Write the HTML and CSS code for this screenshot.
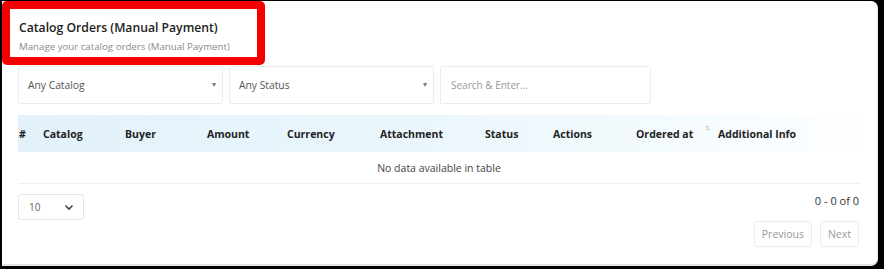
FILE: index.html
```html
<!DOCTYPE html>
<html lang="en">
<head>
  <meta charset="UTF-8">
  <meta name="viewport" content="width=device-width, initial-scale=1.0">
  <title>Catalog Orders (Manual Payment)</title>
  <link rel="stylesheet" href="styles.css">
</head>
<body>
  <div class="frame">
    <!-- TIÊU ĐỀ -->
    <div class="page-head">
      <h1 class="page-title">Catalog Orders (Manual Payment)</h1>
      <p class="page-sub">Manage your catalog orders (Manual Payment)</p>
    </div>

    <div class="content">
      <!-- BỘ LỌC -->
      <div class="filters">
        <div class="select-box">
          <span>Any Catalog</span>
          <span class="caret">&#9662;</span>
        </div>
        <div class="select-box">
          <span>Any Status</span>
          <span class="caret">&#9662;</span>
        </div>
        <input type="text" class="search-box" placeholder="Search &amp; Enter...">
      </div>

      <!-- BẢNG -->
      <table class="orders-table">
        <colgroup>
          <col style="width: 24px">
          <col style="width: 82px">
          <col style="width: 82px">
          <col style="width: 80px">
          <col style="width: 93px">
          <col style="width: 105px">
          <col style="width: 68px">
          <col style="width: 83px">
          <col style="width: 82px">
          <col>
        </colgroup>
        <thead>
          <tr>
            <th>#</th>
            <th>Catalog</th>
            <th>Buyer</th>
            <th>Amount</th>
            <th>Currency</th>
            <th>Attachment</th>
            <th>Status</th>
            <th>Actions</th>
            <th class="sorted">Ordered at <span class="sort-icon">&#8593;&#8595;</span></th>
            <th>Additional Info</th>
          </tr>
        </thead>
        <tbody>
          <tr>
            <td colspan="10" class="empty">No data available in table</td>
          </tr>
        </tbody>
      </table>

      <!-- PHÂN TRANG -->
      <div class="table-foot">
        <div class="length-box">
          <span>10</span>
          <svg width="10" height="7" viewBox="0 0 10 7"><path d="M1.5 1.5 L5 5 L8.5 1.5" fill="none" stroke="#444" stroke-width="1.6"/></svg>
        </div>
        <div class="paging">
          <div class="info">0 - 0 of 0</div>
          <div class="pager">
            <button class="page-btn">Previous</button>
            <button class="page-btn">Next</button>
          </div>
        </div>
      </div>
    </div>
  </div>
</body>
</html>
```

FILE: styles.css
```css
/* === KHUNG === */
body {
  margin: 0;
  background: #000;
  font-family: 'Open Sans', 'Noto Sans', sans-serif;
  color: #333;
}

.frame {
  margin: 1px 6px 3px 2px;
  height: 263px;
  background: #fff;
  border-radius: 0 7px 7px 0;
  border-bottom: 2px solid #e4e4e6;
  border-right: 1px solid #ececec;
}

/* === TIÊU ĐỀ === */
.page-head {
  width: 247px;
  height: 48px;
  border: 8px solid #f40000;
  border-radius: 5px;
  padding: 0;
}

.page-title {
  margin: 0;
  padding: 10px 0 0 9px;
  font-size: 12.2px;
  font-weight: 600;
  color: #222;
  line-height: 17px;
  white-space: nowrap;
}

.page-sub {
  margin: 3px 0 0 9px;
  font-size: 9.7px;
  color: #8b8b8b;
  line-height: 15px;
  white-space: nowrap;
}

.content {
  padding: 1px 18px 0 16px;
}

/* === BỘ LỌC === */
.filters {
  display: flex;
  gap: 6px;
  height: 38px;
}

.select-box {
  width: 205px;
  box-sizing: border-box;
  border: 1px solid #ececec;
  border-radius: 2px;
  display: flex;
  justify-content: space-between;
  align-items: center;
  padding: 0 6px 0 9px;
  font-size: 10.3px;
  color: #555;
}

.caret {
  font-size: 8px;
  color: #777;
  margin-top: -4px;
}

.search-box {
  width: 211px;
  box-sizing: border-box;
  border: 1px solid #ececec;
  border-radius: 2px;
  padding: 0 10px;
  font-family: inherit;
  font-size: 10px;
  margin: 0;
  outline: none;
}

.search-box::placeholder {
  color: #999;
}

/* === BẢNG === */
.orders-table {
  width: 842px;
  margin-top: 11px;
  border-collapse: collapse;
  table-layout: fixed;
}

.orders-table thead tr {
  background: linear-gradient(90deg, #e2f1fa 0%, #eaf6fc 45%, #f5fbfe 80%, #fdfeff 100%);
}

.orders-table th {
  height: 37px;
  padding: 0 0 0 1px;
  text-align: left;
  font-size: 10.5px;
  font-weight: 700;
  color: #222;
  white-space: nowrap;
}

.sorted {
  position: relative;
}

.sort-icon {
  position: absolute;
  right: 9px;
  top: 8px;
  font-size: 7px;
  letter-spacing: -2px;
  color: #888;
  font-weight: 400;
}

.orders-table td.empty {
  height: 29px;
  text-align: center;
  font-size: 10.5px;
  color: #444;
  border-bottom: 1px solid #eeeeee;
}

/* === PHÂN TRANG === */
.table-foot {
  display: flex;
  justify-content: space-between;
  margin-top: 10px;
}

.length-box {
  width: 66px;
  height: 26px;
  box-sizing: border-box;
  border: 1px solid #e6e6e6;
  border-radius: 3px;
  display: flex;
  align-items: center;
  justify-content: space-between;
  padding: 0 9px 0 10px;
  font-size: 10px;
  color: #666;
}

.paging {
  display: flex;
  flex-direction: column;
  align-items: flex-end;
}

.info {
  font-size: 11px;
  color: #333;
  line-height: 14px;
}

.pager {
  display: flex;
  gap: 8px;
  margin-top: 13px;
}

.page-btn {
  height: 26px;
  padding: 0 7px;
  background: #fff;
  border: 1px solid #ececec;
  border-radius: 3px;
  font-family: inherit;
  font-size: 10.5px;
  color: #999;
}
```
